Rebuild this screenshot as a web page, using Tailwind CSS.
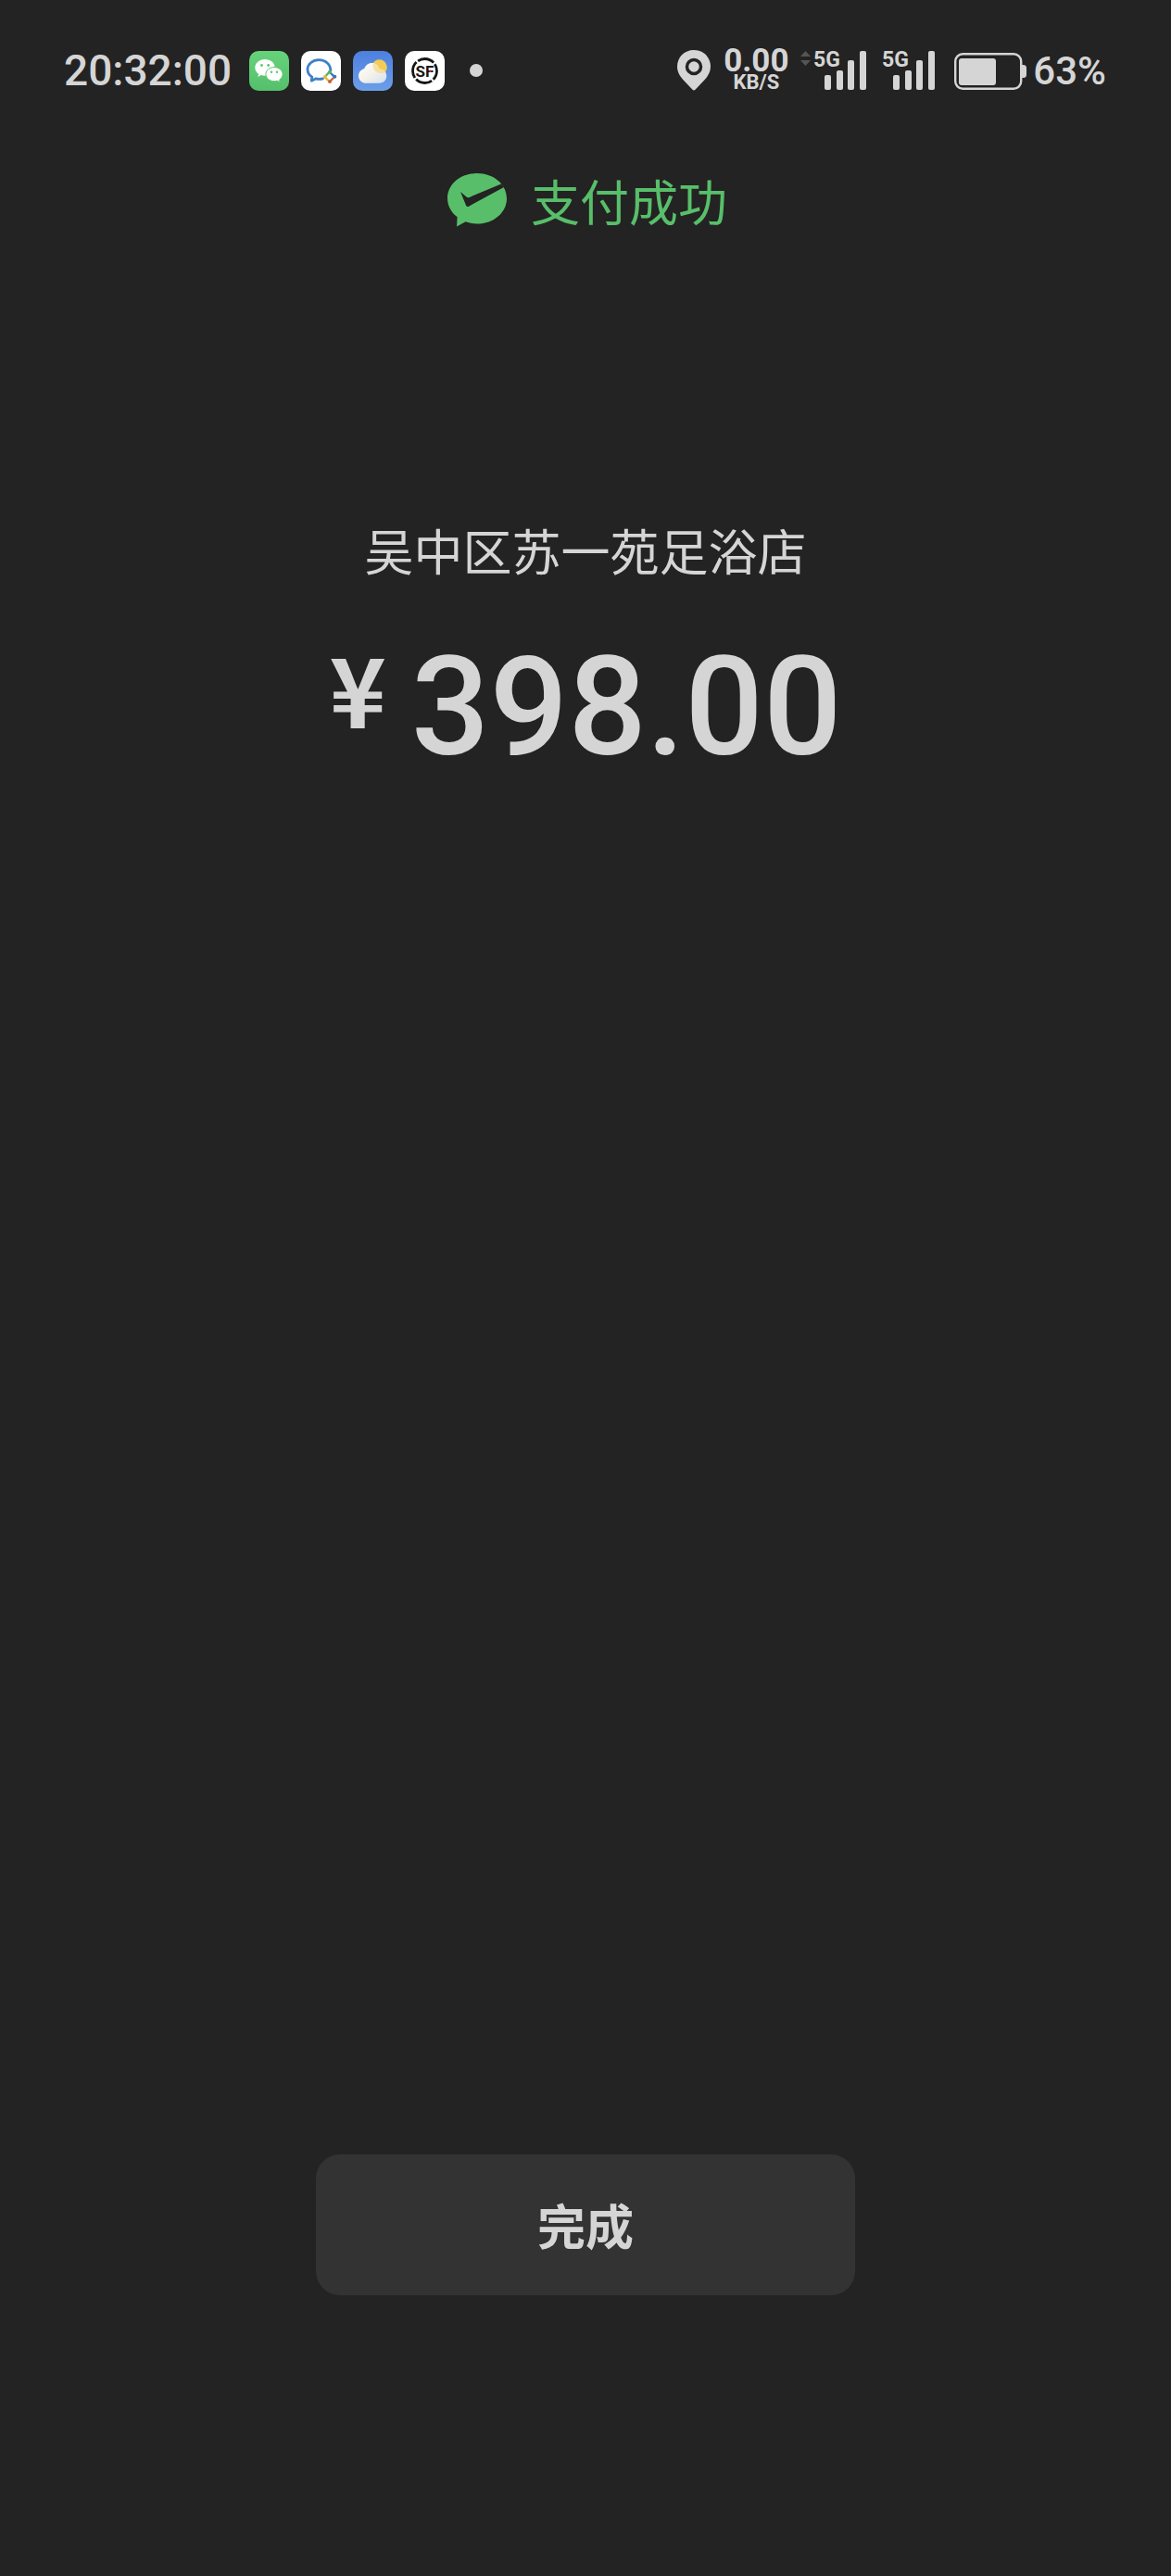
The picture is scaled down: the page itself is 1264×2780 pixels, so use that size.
<!DOCTYPE html>
<html lang="zh-CN">
<head>
    <meta charset="UTF-8">
    <meta name="viewport" content="width=device-width, initial-scale=1.0">
    <title>支付成功</title>
    <script src="https://cdn.jsdelivr.net/npm/@tailwindcss/browser@4"></script>
</head>
<body class="bg-[#232323] text-[#d5d5d5] font-['Noto_Sans_CJK_SC',sans-serif]">
    <div class="min-h-screen flex flex-col">
        <!-- Status bar -->
        <header class="flex items-center justify-between h-[152px] pl-[69px] pr-[70px] font-['Roboto',sans-serif]">
            <div class="flex items-center gap-[13px]">
                <time class="text-[46px] leading-none font-medium mr-[6px]">20:32:00</time>

                <!-- WeChat -->
                <svg class="size-[43px]" viewBox="0 0 43 43" aria-hidden="true">
                    <defs>
                        <linearGradient id="wechat" x1="0" y1="0" x2="0" y2="1">
                            <stop offset="0" stop-color="#66d27a"/>
                            <stop offset="1" stop-color="#55c06c"/>
                        </linearGradient>
                    </defs>
                    <rect width="43" height="43" rx="10" fill="url(#wechat)"/>
                    <path d="M17 9C11 9 6.300 13 6.300 18c0 2.800 1.500 5.200 3.900 6.900L9.300 28l3.600-1.900c1.300.4 2.700.6 4.100.6 5.900 0 10.700-4 10.700-8.900S22.900 9 17 9z" fill="#fff"/>
                    <path d="M27 17.500c-5 0-9.100 3.400-9.100 7.600s4.100 7.600 9.100 7.600c1.200 0 2.300-.2 3.300-.5l3.100 1.600-.8-2.700c2.100-1.400 3.500-3.600 3.500-6 0-4.200-4.100-7.600-9.100-7.600z" fill="#fff" stroke="#5cc872" stroke-width="1"/>
                    <g fill="#5cc872">
                        <circle cx="13.500" cy="15.500" r="1.400"/>
                        <circle cx="20.700" cy="15.500" r="1.400"/>
                        <circle cx="24" cy="22.700" r="1.200"/>
                        <circle cx="30" cy="22.700" r="1.200"/>
                    </g>
                </svg>

                <!-- WeCom -->
                <svg class="size-[43px]" viewBox="0 0 43 43" fill="none" aria-hidden="true">
                    <rect width="43" height="43" rx="10" fill="#fff"/>
                    <path d="M31.800 21.500c.3-7-5.500-11.800-12.600-11.800C12.200 9.700 7 14.300 7 20c0 3.500 1.900 6.300 4.800 8.200l-.6 4 4.500-2.300c2.600.7 5.300.7 7.800 0" stroke="#4080c4" stroke-width="2.800" stroke-linejoin="round" stroke-linecap="round"/>
                    <path d="M27 26.500l3.500-3.700" stroke="#54b65e" stroke-width="2.400" stroke-linecap="round"/>
                    <path d="M32 24l3.700 3.700" stroke="#3a77bd" stroke-width="2.400" stroke-linecap="round"/>
                    <path d="M34.500 29.500L31 33" stroke="#c8643a" stroke-width="2.400" stroke-linecap="round"/>
                    <path d="M29.500 32L26 28.500" stroke="#e3b93c" stroke-width="2.400" stroke-linecap="round"/>
                    <circle cx="31" cy="22.700" r="2" fill="#54b65e"/>
                    <circle cx="36.300" cy="27.800" r="2" fill="#3a77bd"/>
                    <circle cx="31" cy="33" r="2" fill="#c8643a"/>
                    <circle cx="25.800" cy="28" r="2" fill="#e3b93c"/>
                </svg>

                <!-- Weather -->
                <svg class="size-[43px]" viewBox="0 0 43 43" aria-hidden="true">
                    <defs>
                        <linearGradient id="sky" x1="0" y1="0" x2="0" y2="1">
                            <stop offset="0" stop-color="#4d7fe0"/>
                            <stop offset="1" stop-color="#6c9fe8"/>
                        </linearGradient>
                        <linearGradient id="cloud" x1="0" y1="0" x2="1" y2="1">
                            <stop offset="0" stop-color="#ffffff"/>
                            <stop offset="0.500" stop-color="#f4f2ea"/>
                            <stop offset="1" stop-color="#d3dff2"/>
                        </linearGradient>
                    </defs>
                    <rect width="43" height="43" rx="10" fill="url(#sky)"/>
                    <circle cx="28.500" cy="17.500" r="8.300" fill="#f2cc55"/>
                    <path d="M14.500 34.800C9.500 34.800 6 31.400 6 27c0-4 2.700-7 6.200-7.700C13.300 15.500 16.600 13 20.300 13c4.100 0 7.400 2.700 8.300 6.600 4.500 0 7.700 3.400 7.700 7.500 0 4.300-3.400 7.700-7.800 7.700z" fill="url(#cloud)"/>
                    <path d="M22 13.300c3.500.8 5.900 3.200 6.600 6.300 2.900 0 5 1.200 6.300 3.100-2.500 2-8 2-10.900-1.200-2.200-2.500-2.800-5.500-2-8.200z" fill="#f5d98a" opacity=".75"/>
                </svg>

                <!-- SF Express -->
                <svg class="size-[43px]" viewBox="0 0 43 43" aria-hidden="true">
                    <rect width="43" height="43" rx="10" fill="#fff"/>
                    <circle cx="21.500" cy="21.500" r="13" fill="none" stroke="#161616" stroke-width="2.800" stroke-dasharray="18.420 2" stroke-dashoffset="8.200"/>
                    <text x="21.500" y="27.500" text-anchor="middle" font-family="Roboto, sans-serif" font-size="17" font-weight="700" fill="#161616">SF</text>
                    <circle cx="27.500" cy="21.800" r="1.300" fill="#c0392b"/>
                </svg>

                <span class="size-[14px] rounded-full bg-[#d5d5d5] ml-[14px]"></span>
            </div>

            <div class="flex items-center">
                <!-- Location -->
                <svg class="w-[38px] h-[44px]" viewBox="0 0 38 44" aria-hidden="true">
                    <path d="M19 0C8.500 0 1 8 1 17.800c0 6.200 3 10.400 6.300 14.200L17.500 42.800c.9.900 2.100.9 3 0L30.700 32C34 28.200 37 24 37 17.800 37 8 29.500 0 19 0z" fill="#d5d5d5"/>
                    <circle cx="19" cy="18" r="7.500" fill="#d5d5d5" stroke="#232323" stroke-width="3.500"/>
                </svg>

                <!-- Network speed -->
                <div class="flex flex-col items-center w-[72px] ml-3 font-bold">
                    <span class="text-[35px] leading-[26px]">0.00</span>
                    <span class="text-[22px] leading-[20px]">KB/S</span>
                </div>

                <!-- SIM 1 -->
                <svg class="w-[74px] h-[44px] ml-[10px] overflow-visible" viewBox="0 0 74 44" fill="#d5d5d5" role="img" aria-label="5G">
                    <path d="M2 7L7.500 1 13 7zM2 11h11l-5.500 6z" fill="#555"/>
                    <text x="16" y="18" font-family="Roboto, sans-serif" font-size="23" font-weight="700">5G</text>
                    <rect x="28" y="27" width="7" height="16" rx="2"/>
                    <rect x="41" y="22" width="7" height="21" rx="2"/>
                    <rect x="53" y="11" width="7" height="32" rx="2"/>
                    <rect x="66" y="1" width="7" height="42" rx="2"/>
                </svg>

                <!-- SIM 2 -->
                <svg class="w-[58px] h-[44px] ml-4 overflow-visible" viewBox="0 0 58 44" fill="#d5d5d5" role="img" aria-label="5G">
                    <text x="0" y="18" font-family="Roboto, sans-serif" font-size="23" font-weight="700">5G</text>
                    <rect x="12" y="27" width="7" height="16" rx="2"/>
                    <rect x="25" y="22" width="7" height="21" rx="2"/>
                    <rect x="37" y="11" width="7" height="32" rx="2"/>
                    <rect x="50" y="1" width="7" height="42" rx="2"/>
                </svg>

                <!-- Battery -->
                <svg class="w-[78px] h-[40px] ml-5 mt-[2px]" viewBox="0 0 78 40" fill="#d5d5d5" aria-hidden="true">
                    <rect x="1.200" y="1.200" width="71" height="37.600" rx="8" fill="none" stroke="#d5d5d5" stroke-width="2.400"/>
                    <rect x="5" y="6" width="40" height="29" rx="3"/>
                    <path d="M73 13h1.500a3.500 3.500 0 0 1 3.500 3.500v7a3.500 3.500 0 0 1-3.500 3.500H73z"/>
                </svg>
                <span class="text-[42px] leading-none font-medium ml-[7px] mt-[2px]">63%</span>
            </div>
        </header>

        <!-- Payment result -->
        <main class="flex-1 flex flex-col items-center">
            <div class="flex items-center gap-[25px] h-[80px] mt-[24px] pl-[3px] text-[#58be6a]">
                <svg class="w-[66px] h-[58px]" viewBox="0 0 66 58" fill="currentColor" aria-hidden="true">
                    <path d="M33 0C15 0 1 12.100 1 27c0 8.100 4.100 15.300 10.600 20.300L11 57.500l9.500-5.200C24.400 53.700 28.600 54.500 33 54.500c17.900 0 32-12.100 32-27.300C65 12.100 51 0 33 0z"/>
                    <path d="M15 20l6.500 5.500c1 .8 2 .9 3.200.4L59 11.500l3 3.500L24 35.700c-1.300.7-2.300.4-2.900-.9z" fill="#232323"/>
                </svg>
                <h1 class="text-[53px] leading-none">支付成功</h1>
            </div>

            <p class="text-[53px] leading-[80px] mt-[297px]">吴中区苏一苑足浴店</p>

            <div class="flex items-start mt-[50px]">
                <span class="text-[104px] leading-[116px] font-bold">¥</span>
                <span class="text-[149px] leading-[160px] font-medium font-['Roboto',sans-serif] ml-[27px]">398.00</span>
            </div>
        </main>

        <footer class="flex justify-center pb-[303px]">
            <button type="button" class="w-[46%] h-[152px] rounded-[26px] bg-[#333333] text-[52px] font-bold">完成</button>
        </footer>
    </div>
</body>
</html>
